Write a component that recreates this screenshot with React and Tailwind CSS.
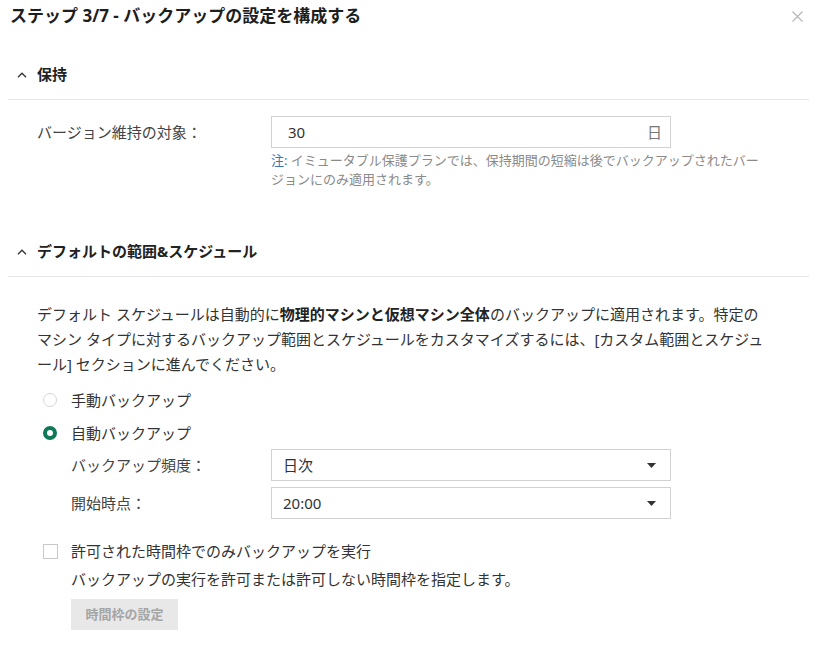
import React from "react";

const font = { fontFamily: '"Noto Sans", "Noto Sans CJK JP", sans-serif' };

function Caret() {
  return (
    <svg width="10" height="6" viewBox="0 0 10 6" className="shrink-0">
      <path d="M1 5.2 L5 1.2 L9 5.2" fill="none" stroke="#333" strokeWidth="1.3" />
    </svg>
  );
}

function DownArrow() {
  return (
    <svg width="9" height="5" viewBox="0 0 9 5">
      <path d="M0 0 H9 L4.5 5 Z" fill="#333" />
    </svg>
  );
}

function SectionHeader({ title }) {
  return (
    <div className="mx-[8px] h-[50px] flex items-center border-b border-[#e6e6e6]">
      <div className="w-[29px] flex justify-end pr-[10px]">
        <Caret />
      </div>
      <span className="text-[15px] font-bold text-[#222]">{title}</span>
    </div>
  );
}

function Select({ value }) {
  return (
    <div className="w-[400px] h-[32px] border border-[#d2d2d2] flex items-center justify-between pl-[11px] pr-[14px] text-[15px] text-[#333]">
      <span>{value}</span>
      <DownArrow />
    </div>
  );
}

export default function App() {
  return (
    <div className="w-[817px] h-[648px] bg-white text-[#333] overflow-hidden" style={font}>
      <div className="h-[32px] flex items-center justify-between pl-[10px] pr-[14px]">
        <h1 className="text-[17px] font-bold text-[#1e1e1e]">ステップ 3/7 - バックアップの設定を構成する</h1>
        <svg width="11" height="11" viewBox="0 0 11 11">
          <path d="M0.5 0.5 L10.5 10.5 M10.5 0.5 L0.5 10.5" stroke="#b5b5b5" strokeWidth="1.1" />
        </svg>
      </div>

      <div className="mt-[18px]">
        <SectionHeader title="保持" />
        <div className="pl-[37px] mt-[16px]">
          <div className="flex items-center">
            <div className="w-[234px] text-[15px] text-[#444]">バージョン維持の対象：</div>
            <div className="w-[400px] h-[32px] border border-[#d2d2d2] flex items-center justify-between pl-[16px] pr-[8px] text-[15px]">
              <span className="text-[#333]">30</span>
              <span className="text-[#777]">日</span>
            </div>
          </div>
          <div className="ml-[234px] mt-[3px] w-[500px] text-[13px] leading-[19px] text-[#8a8a8a]">
            <span className="text-[#3a74b5]">注:</span> イミュータブル保護プランでは、保持期間の短縮は後でバックアップされたバージョンにのみ適用されます。
          </div>
        </div>
      </div>

      <div className="mt-[38px]">
        <SectionHeader title="デフォルトの範囲&スケジュール" />
        <div className="pl-[37px]">
          <p className="mt-[25px] w-[727px] text-[15px] leading-[25px] text-[#333]">
            デフォルト スケジュールは自動的に<b className="font-bold text-[#222]">物理的マシンと仮想マシン全体</b>のバックアップに適用されます。特定のマシン タイプに対するバックアップ範囲とスケジュールをカスタマイズするには、[カスタム範囲とスケジュール] セクションに進んでください。
          </p>

          <div className="mt-[8px] h-[30px] flex items-center pl-[6px]">
            <span className="w-[14px] h-[14px] rounded-full border border-[#d6d6d6] bg-white" />
            <span className="ml-[14px] text-[15px] text-[#333]">手動バックアップ</span>
          </div>
          <div className="mt-[3px] h-[30px] flex items-center pl-[6px]">
            <span className="w-[14px] h-[14px] rounded-full border-[4px] border-[#0f7858] bg-white" />
            <span className="ml-[14px] text-[15px] text-[#333]">自動バックアップ</span>
          </div>

          <div className="pl-[34px] mt-[1px] flex flex-col gap-[6px]">
            <div className="flex items-center">
              <div className="w-[200px] text-[15px] text-[#444]">バックアップ頻度：</div>
              <Select value="日次" />
            </div>
            <div className="flex items-center">
              <div className="w-[200px] text-[15px] text-[#444]">開始時点：</div>
              <Select value="20:00" />
            </div>
          </div>

          <div className="mt-[20px] h-[24px] flex items-center pl-[6px]">
            <span className="w-[15px] h-[15px] border border-[#c9c9c9] bg-white" />
            <span className="ml-[13px] text-[15px] text-[#333]">許可された時間枠でのみバックアップを実行</span>
          </div>
          <div className="pl-[34px] mt-[4px] h-[24px] flex items-center text-[15px] text-[#333]">
            バックアップの実行を許可または許可しない時間枠を指定します。
          </div>
          <div className="pl-[34px] mt-[8px]">
            <div className="w-[107px] h-[31px] bg-[#e8e8e8] flex items-center justify-center text-[13px] font-bold text-[#a5a5a5]">
              時間枠の設定
            </div>
          </div>
        </div>
      </div>
    </div>
  );
}
